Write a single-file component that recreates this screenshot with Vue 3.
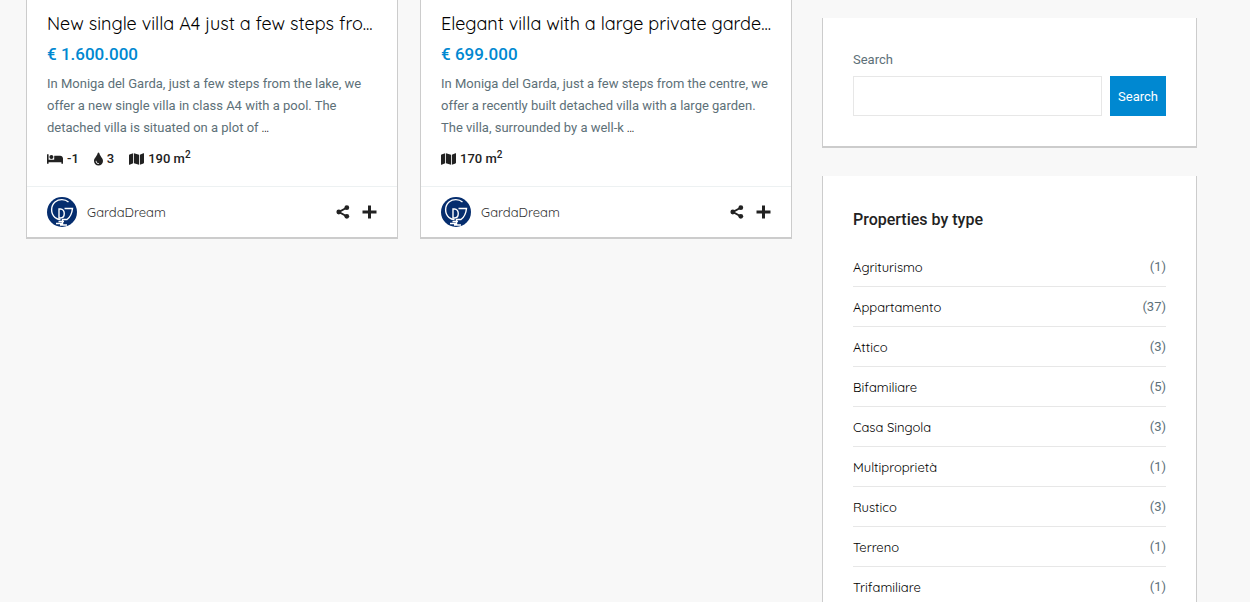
<template>
  <div class="page">
    <main class="listings">
      <article v-for="item in listings" :key="item.title" class="card">
        <div class="card-body">
          <h2 class="title"><a href="#">{{ item.title }}</a></h2>
          <div class="price">{{ item.price }}</div>
          <p class="desc">{{ item.text }} <a href="#">...</a></p>
          <div class="meta">
            <span v-if="item.beds" class="meta-item">
              <svg class="icon bed" viewBox="0 0 640 512"><path d="M176 256c44.11 0 80-35.89 80-80s-35.89-80-80-80-80 35.89-80 80 35.89 80 80 80zm352-128H304c-8.84 0-16 7.16-16 16v144H64V80c0-8.84-7.16-16-16-16H16C7.16 64 0 71.16 0 80v352c0 8.84 7.16 16 16 16h32c8.84 0 16-7.16 16-16v-48h512v48c0 8.84 7.16 16 16 16h32c8.84 0 16-7.16 16-16V240c0-61.86-50.14-112-112-112z" /></svg>
              {{ item.beds }}
            </span>
            <span v-if="item.baths" class="meta-item">
              <svg class="icon drop" viewBox="0 0 352 512"><path d="M205.22 22.09c-7.94-28.78-49.44-30.12-58.44 0C100.01 179.85 0 222.72 0 333.91 0 432.35 78.72 512 176 512s176-79.65 176-178.09c0-111.75-99.79-153.34-146.78-311.82zM176 448c-61.75 0-112-50.25-112-112 0-8.84 7.16-16 16-16s16 7.16 16 16c0 44.11 35.89 80 80 80 8.84 0 16 7.16 16 16s-7.16 16-16 16z" /></svg>
              {{ item.baths }}
            </span>
            <span class="meta-item">
              <svg class="icon map" viewBox="0 0 576 512"><path d="M0 117.66v346.32c0 11.32 11.43 19.06 21.94 14.86L160 416V32L20.12 87.95A32.006 32.006 0 0 0 0 117.66zM192 416l192 64V96L192 32v384zM554.06 33.16L416 96v384l139.88-55.95A31.996 31.996 0 0 0 576 394.34V48.02c0-11.32-11.43-19.06-21.94-14.86z" /></svg>
              <span>{{ item.size }} m<sup>2</sup></span>
            </span>
          </div>
        </div>
        <div class="card-footer">
          <a href="#" class="agent">
            <svg class="avatar" viewBox="0 0 30 30">
              <circle cx="15" cy="15" r="15" fill="#052d6e" />
              <g fill="none" stroke="#fff" stroke-width="1.4">
                <path d="M21.5 5C18 2 12 1.800 8 5C3.500 9 3.500 16.500 8 20.500C9.500 21.800 11.500 22.500 13.500 22.500" />
                <path d="M12 12V21H13.500C18.500 21 18.500 12 13.500 12Z" />
                <path d="M17.500 11.500H25.500C25 16 23.500 20 20 22.500H15" />
                <path d="M15.500 22V28M11.500 24.500H17M9 26.500H15.500M13 28H20" />
              </g>
            </svg>
            <span>GardaDream</span>
          </a>
          <div class="actions">
            <button type="button" aria-label="Share">
              <svg width="14" height="14" viewBox="0 0 14 14">
                <path d="M11 2.500L3 7L11 11.500" fill="none" stroke="#222" stroke-width="2" />
                <circle cx="10.800" cy="2.700" r="2.400" />
                <circle cx="2.800" cy="7" r="2.400" />
                <circle cx="10.800" cy="11.300" r="2.400" />
              </svg>
            </button>
            <button type="button" aria-label="Add to compare">
              <svg width="15" height="14" viewBox="0 0 15 14">
                <path d="M7.500 0.500V13.500M0.500 7H14.500" stroke="#222" stroke-width="3" />
              </svg>
            </button>
          </div>
        </div>
      </article>
    </main>

    <aside class="sidebar">
      <form class="widget" @submit.prevent>
        <label class="search-label" for="search">Search</label>
        <div class="search-row">
          <input id="search" v-model="query" type="search" />
          <button type="submit">Search</button>
        </div>
      </form>

      <section class="widget">
        <h3 class="widget-title">Properties by type</h3>
        <ul class="types">
          <li v-for="type in types" :key="type.name">
            <a href="#">{{ type.name }}</a>
            <span>({{ type.count }})</span>
          </li>
        </ul>
      </section>
    </aside>
  </div>
</template>

<script setup>
import { ref } from 'vue'

const query = ref('')

const listings = [
  {
    title: 'New single villa A4 just a few steps fro...',
    price: '€ 1.600.000',
    text: 'In Moniga del Garda, just a few steps from the lake, we offer a new single villa in class A4 with a pool. The detached villa is situated on a plot of',
    beds: '-1',
    baths: '3',
    size: 190
  },
  {
    title: 'Elegant villa with a large private garde...',
    price: '€ 699.000',
    text: 'In Moniga del Garda, just a few steps from the centre, we offer a recently built detached villa with a large garden. The villa, surrounded by a well-k',
    size: 170
  }
]

const types = [
  { name: 'Agriturismo', count: 1 },
  { name: 'Appartamento', count: 37 },
  { name: 'Attico', count: 3 },
  { name: 'Bifamiliare', count: 5 },
  { name: 'Casa Singola', count: 3 },
  { name: 'Multiproprietà', count: 1 },
  { name: 'Rustico', count: 3 },
  { name: 'Terreno', count: 1 },
  { name: 'Trifamiliare', count: 1 }
]
</script>

<style>
body {
  background: #f8f8f8;
}
</style>

<style scoped>
*, *::before, *::after { box-sizing: border-box; margin: 0; padding: 0; }

.page {
  display: grid;
  grid-template-columns: minmax(0, 1fr) 375px;
  gap: 30px;
  align-items: start;
  height: 100vh;
  padding: 0 53px 0 26px;
  overflow: hidden;
  background: #f8f8f8;
  color: #5d7078;
  font-family: Roboto, sans-serif;
  font-size: 13px;
}

a {
  color: #000;
  font-family: Quicksand, Lato, sans-serif;
  text-decoration: none;
}

.listings {
  display: grid;
  grid-template-columns: repeat(2, minmax(0, 1fr));
  gap: 22px;
}

.card, .widget {
  background: #fff;
  border: 1px solid #ccc;
  border-width: 0 1px 2px;
}

.card-body { padding: 10px 20px 16px; }

.title {
  overflow: hidden;
  font-size: 18px;
  font-weight: 400;
  line-height: 28px;
  white-space: nowrap;
}

.price {
  margin: 3px 0 6px;
  color: #0088d1;
  font-size: 17px;
  font-weight: 500;
  line-height: 26px;
}

.desc { line-height: 22px; }

.desc a { line-height: 1; }

.meta {
  display: flex;
  gap: 15px;
  margin-top: 9px;
  color: #222;
  font-weight: 500;
  line-height: 22px;
}

.meta-item {
  display: flex;
  align-items: center;
  gap: 4px;
}

.meta sup {
  font-size: 10px;
  line-height: 0;
}

.icon { height: 14px; fill: #222; }
.bed { width: 16px; }
.drop { width: 9px; }
.map { width: 15px; }

.card-footer {
  display: flex;
  align-items: center;
  justify-content: space-between;
  padding: 10px 20px;
  border-top: 1px solid #edf1f2;
}

.agent {
  display: flex;
  align-items: center;
  gap: 10px;
  color: #333;
}

.avatar { width: 30px; height: 30px; }

.actions { display: flex; gap: 12px; }

.actions button {
  display: flex;
  border: none;
  background: none;
  cursor: pointer;
}

.actions svg { fill: #222; }

.sidebar {
  display: flex;
  flex-direction: column;
  gap: 28px;
  padding-top: 18px;
}

.widget { padding: 30px; }

.search-label {
  display: block;
  margin-bottom: 4px;
  line-height: 24px;
}

.search-row { display: flex; gap: 8px; }

.search-row input {
  flex: 1;
  min-width: 0;
  height: 40px;
  padding: 0 10px;
  border: 1px solid #e7e7e7;
  background: #fff;
  font: inherit;
  outline: none;
}

.search-row button {
  width: 56px;
  height: 40px;
  border: none;
  background: #0088d1;
  color: #fff;
  font: inherit;
  cursor: pointer;
}

.widget-title {
  margin-bottom: 13px;
  color: #222;
  font-size: 16px;
  font-weight: 500;
  line-height: 28px;
}

.types { list-style: none; }

.types li {
  display: flex;
  align-items: center;
  justify-content: space-between;
  height: 40px;
  border-bottom: 1px solid #e7e7e7;
}
</style>
